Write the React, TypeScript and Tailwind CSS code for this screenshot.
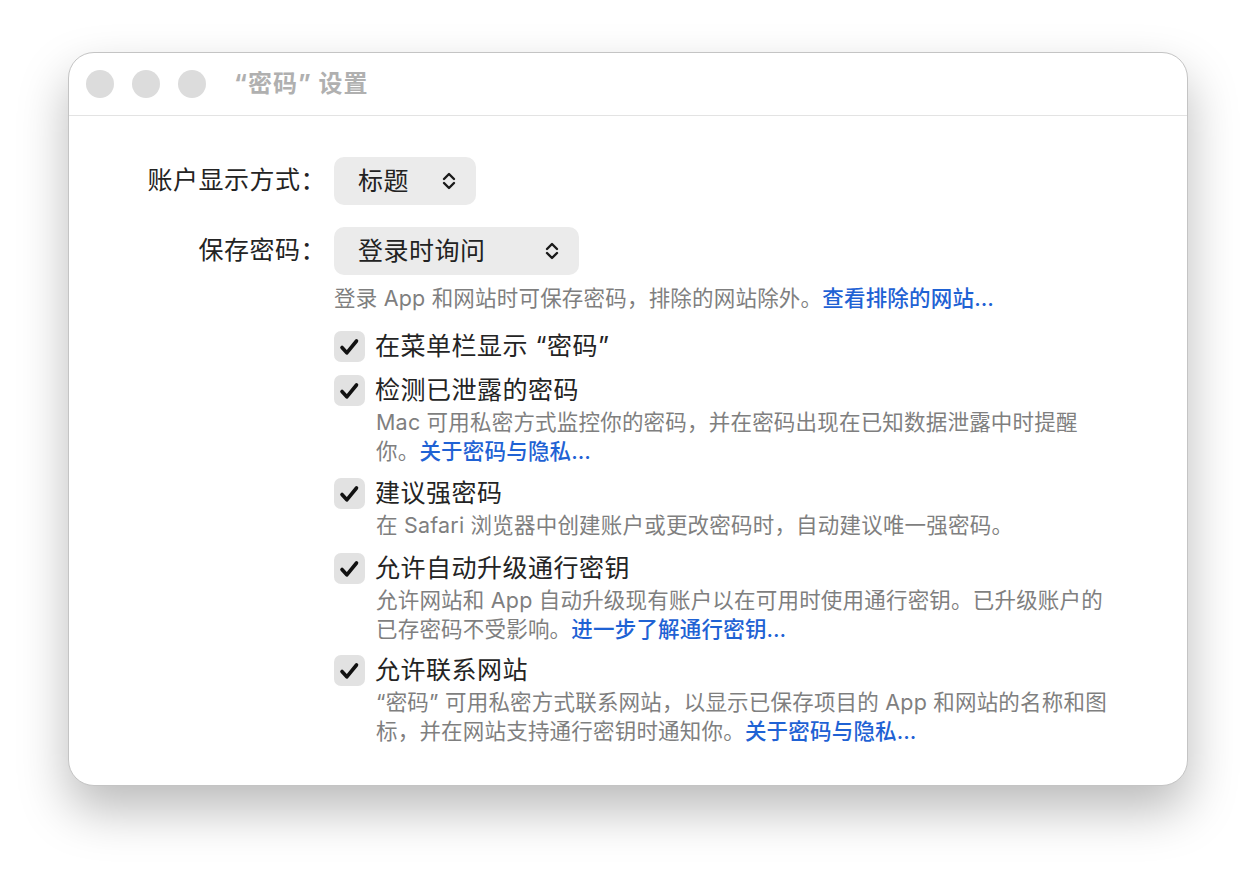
import React from "react";

const font = "font-['Inter','Noto_Sans_CJK_SC',sans-serif]";

function Chevron() {
  return (
    <svg width="14" height="22" viewBox="0 0 14 22" fill="none">
      <path d="M2 9 L7 4 L12 9" stroke="#1a1a1a" strokeWidth="2.4" strokeLinecap="round" strokeLinejoin="round" />
      <path d="M2 13 L7 18 L12 13" stroke="#1a1a1a" strokeWidth="2.4" strokeLinecap="round" strokeLinejoin="round" />
    </svg>
  );
}

function Popup({ label, width }: { label: string; width: string }) {
  return (
    <div className={`${width} h-[48px] rounded-[10px] bg-[#ebebeb] flex items-center justify-between pl-6 pr-[20px]`}>
      <span className="text-[25px] tracking-[0.5px] leading-none text-[#222]">{label}</span>
      <Chevron />
    </div>
  );
}

function Check() {
  return (
    <div className="w-[31px] h-[31px] shrink-0 rounded-[7px] bg-[#e2e2e2]">
      <svg width="31" height="31" viewBox="0 0 31 31" fill="none">
        <path d="M8 16.5 L12.8 21.8 L22.5 10" stroke="#111" strokeWidth="3.6" strokeLinecap="round" strokeLinejoin="round" />
      </svg>
    </div>
  );
}

function Link({ children }: { children: React.ReactNode }) {
  return <span className="text-[#1f62d4] font-medium">{children}</span>;
}

function Item({ label, lines, top }: { label: string; lines?: React.ReactNode[]; top: string }) {
  return (
    <div className={top}>
      <div className="flex items-center h-[32px]">
        <Check />
        <span className="ml-[10px] text-[25px] tracking-[0.5px] leading-[32px] text-[#242424]">{label}</span>
      </div>
      {lines && (
        <div className="mt-[2px] ml-[42px] text-[21.5px] tracking-[0.2px] leading-[29px] text-[#7f7f7f]">
          {lines.map((l, i) => (
            <div key={i} className="whitespace-nowrap">{l}</div>
          ))}
        </div>
      )}
    </div>
  );
}

export default function App() {
  return (
    <div className={`min-h-dvh bg-white pt-[52px] pl-[68px] ${font}`}>
      <div className="w-[1120px] h-[734px] rounded-[26px] bg-white border border-[#c4c4c4] shadow-[0_24px_50px_rgba(0,0,0,0.27)] overflow-hidden">
        <div className="h-[63px] border-b border-[#e3e3e3] flex items-center pl-[17px]">
          <div className="flex gap-[18px]">
            <div className="w-[28px] h-[28px] rounded-full bg-[#dcdcdc]" />
            <div className="w-[28px] h-[28px] rounded-full bg-[#dcdcdc]" />
            <div className="w-[28px] h-[28px] rounded-full bg-[#dcdcdc]" />
          </div>
          <span className="ml-[28px] text-[24px] tracking-[1px] font-bold text-[#b0b0b0]">“密码” 设置</span>
        </div>

        <div className="pt-[41px]">
          <div className="flex items-center">
            <div className="w-[257px] text-right text-[25px] tracking-[0.5px] text-[#242424]">账户显示方式：</div>
            <div className="ml-[8px]">
              <Popup label="标题" width="w-[142px]" />
            </div>
          </div>
          <div className="flex items-center mt-[22px]">
            <div className="w-[257px] text-right text-[25px] tracking-[0.5px] text-[#242424]">保存密码：</div>
            <div className="ml-[8px]">
              <Popup label="登录时询问" width="w-[245px]" />
            </div>
          </div>

          <div className="ml-[265px]">
            <div className="mt-[9px] text-[21.5px] tracking-[0.2px] leading-[29px] text-[#7f7f7f] whitespace-nowrap">
              登录 App 和网站时可保存密码，排除的网站除外。<Link>查看排除的网站…</Link>
            </div>

            <Item top="mt-[17px]" label="在菜单栏显示 “密码”" />
            <Item
              top="mt-[12px]"
              label="检测已泄露的密码"
              lines={[
                "Mac 可用私密方式监控你的密码，并在密码出现在已知数据泄露中时提醒",
                <>你。<Link>关于密码与隐私…</Link></>,
              ]}
            />
            <Item
              top="mt-[11px]"
              label="建议强密码"
              lines={["在 Safari 浏览器中创建账户或更改密码时，自动建议唯一强密码。"]}
            />
            <Item
              top="mt-[12px]"
              label="允许自动升级通行密钥"
              lines={[
                "允许网站和 App 自动升级现有账户以在可用时使用通行密钥。已升级账户的",
                <>已存密码不受影响。<Link>进一步了解通行密钥…</Link></>,
              ]}
            />
            <Item
              top="mt-[10px]"
              label="允许联系网站"
              lines={[
                "“密码” 可用私密方式联系网站，以显示已保存项目的 App 和网站的名称和图",
                <>标，并在网站支持通行密钥时通知你。<Link>关于密码与隐私…</Link></>,
              ]}
            />
          </div>
        </div>
      </div>
    </div>
  );
}
